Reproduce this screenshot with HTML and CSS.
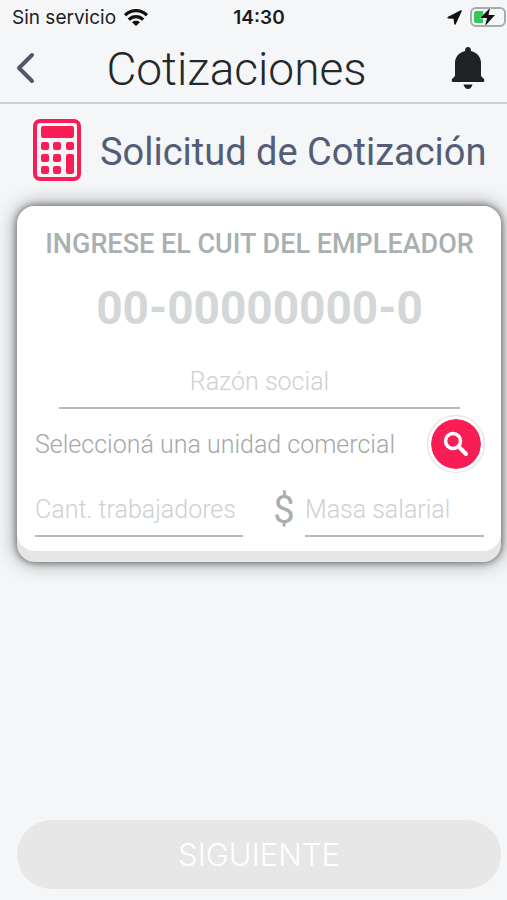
FILE: index.html
```
<!DOCTYPE html>
<html lang="es">
<head>
  <meta charset="UTF-8">
  <meta name="viewport" content="width=device-width, initial-scale=1">
  <title>Cotizaciones</title>
  <link rel="stylesheet" href="styles.css">
</head>
<body>

  <div class="status-bar">
    <div class="status-left">
      <span>Sin servicio</span>
      <svg width="24" height="17" viewBox="0 0 24 17" aria-hidden="true">
        <g fill="none" stroke="#111" stroke-width="3.2">
          <path d="M1 6.200C7.500 .2 16.500 .2 23 6.200"/>
          <path d="M4.800 10.600C9 6.600 15 6.600 19.200 10.600"/>
        </g>
        <path d="M12 17L8 13.200C10.200 11.300 13.800 11.300 16 13.200Z" fill="#111"/>
      </svg>
    </div>
    <strong class="status-time">14:30</strong>
    <div class="status-right">
      <svg width="15" height="15" viewBox="0 0 15 15" aria-hidden="true">
        <path d="M14 1L1.200 7.600L7.200 8L8 14Z" fill="#111" stroke="#111" stroke-width="1.600" stroke-linejoin="round"/>
      </svg>
      <svg width="36" height="20" viewBox="0 0 36 20" aria-hidden="true">
        <rect x="1" y="1" width="34" height="18" rx="5" fill="none" stroke="#a9abad" stroke-width="2"/>
        <path d="M6 4H13V16H6Q4 16 4 14V6Q4 4 6 4Z" fill="#34c759"/>
        <path d="M20 1L10 11H17L15 19L25 8H18.500Z" fill="#111" stroke="#f4f5f7" stroke-width="1" paint-order="stroke"/>
      </svg>
    </div>
  </div>

  <header class="header">
    <button type="button" class="icon-button" aria-label="Volver">
      <svg width="20" height="32" viewBox="0 0 20 32">
        <path d="M16 3L3 16L16 29" fill="none" stroke="#55566e" stroke-width="4" stroke-linecap="round" stroke-linejoin="round"/>
      </svg>
    </button>
    <h1>Cotizaciones</h1>
    <button type="button" class="icon-button" aria-label="Notificaciones">
      <svg width="34" height="42" viewBox="0 0 34 42">
        <path d="M17 0C15 0 14 1.500 14 4C8 5.500 4 10 4 16V29L1 32Q0 35 2 35H32Q34 35 33 32L30 29V16C30 10 26 5.500 20 4C20 1.500 19 0 17 0Z" fill="#1f2225"/>
        <path d="M12.500 37.500H21.500C21 40 19 42 17 42S13 40 12.500 37.500Z" fill="#1f2225"/>
      </svg>
    </button>
  </header>

  <main class="content">
    <div class="section-title">
      <svg width="50" height="64" viewBox="0 0 50 64" aria-hidden="true">
        <rect x="3" y="3" width="44" height="58" rx="5" fill="none" stroke="#f81e55" stroke-width="4"/>
        <g fill="#f81e55">
          <rect x="9" y="8" width="33" height="12" rx="2"/>
          <rect x="9" y="24" width="8" height="8" rx="2"/>
          <rect x="21" y="24" width="8" height="8" rx="2"/>
          <rect x="34" y="24" width="8" height="8" rx="2"/>
          <rect x="9" y="36" width="8" height="8" rx="2"/>
          <rect x="21" y="36" width="8" height="8" rx="2"/>
          <rect x="34" y="36" width="8" height="20" rx="2"/>
          <rect x="9" y="48" width="8" height="8" rx="2"/>
          <rect x="21" y="48" width="8" height="8" rx="2"/>
        </g>
      </svg>
      <h2>Solicitud de Cotización</h2>
    </div>

    <form class="form" id="form">
      <div class="card">
        <label class="cuit-label" for="cuit">INGRESE EL CUIT DEL EMPLEADOR</label>
        <input type="text" class="cuit" id="cuit" inputmode="numeric" placeholder="00-00000000-0">
        <input type="text" class="field company" aria-label="Razón social" placeholder="Razón social">

        <div class="unit-row">
          <select class="unit" aria-label="Unidad comercial">
            <option>Seleccioná una unidad comercial</option>
          </select>
          <button type="button" class="search" aria-label="Buscar">
            <svg width="26" height="26" viewBox="0 0 26 26">
              <circle cx="10" cy="10" r="7.500" fill="none" stroke="#fff" stroke-width="3.500"/>
              <path d="M16 16L23 23" stroke="#fff" stroke-width="4" stroke-linecap="round"/>
            </svg>
          </button>
        </div>

        <div class="amount-row">
          <input type="text" class="field workers" aria-label="Cantidad de trabajadores" placeholder="Cant. trabajadores">
          <label class="currency" for="salary">$</label>
          <input type="text" class="field salary" id="salary" placeholder="Masa salarial">
        </div>
      </div>
    </form>

    <button type="submit" class="next" form="form" disabled>SIGUIENTE</button>
  </main>

</body>
</html>
```
FILE: styles.css
```
* {
  box-sizing: border-box;
}
body {
  margin: 0;
  min-height: 100vh;
  display: flex;
  flex-direction: column;
  background-color: #f4f6f8;
  font-family: Roboto, sans-serif;
}
h1, h2 {
  margin: 0;
  white-space: nowrap;
}
button, input, select {
  font-family: inherit;
  border: none;
  padding: 0;
  margin: 0;
  background: none;
}
svg {
  display: block;
  flex-shrink: 0;
}
.status-bar {
  display: grid;
  grid-template-columns: 1fr auto 1fr;
  align-items: center;
  height: 34px;
  padding: 0 1px 0 12px;
  font-family: Inter, sans-serif;
  font-size: 19px;
  color: #1c1c1e;
}
.status-left, .status-right {
  display: flex;
  align-items: center;
  gap: 8px;
}
.status-right {
  justify-content: flex-end;
}
.status-time {
  font-weight: 600;
}
.header {
  display: flex;
  align-items: center;
  justify-content: space-between;
  height: 70px;
  padding: 0 22px 0 16px;
  border-bottom: 2px solid #cfd0d2;
}
.header h1 {
  padding-right: 14px;
  font-size: 46px;
  line-height: 52px;
  padding-top: 2px;
  font-weight: 300;
  color: #25282b;
}
.icon-button {
  cursor: pointer;
}
.content {
  flex: 1;
  display: flex;
  flex-direction: column;
  padding: 14px 6px 11px 17px;
}
.section-title {
  display: flex;
  align-items: center;
  gap: 18px;
  padding-left: 15px;
}
.section-title h2 {
  padding-top: 4px;
  font-size: 38px;
  font-weight: 400;
  color: #535d76;
}
.form {
  margin-top: 24px;
  padding-bottom: 11px;
  border-radius: 18px;
  background-color: #e6e6e6;
  box-shadow: 0 0 20px 1px rgba(0, 0, 0, 0.4), 0 0 6px 1px rgba(0, 0, 0, 0.4);
}
.card {
  display: flex;
  flex-direction: column;
  padding: 21px 17px 14px 18px;
  border-radius: 18px;
  background-color: #fff;
}
.cuit-label {
  text-align: center;
  white-space: nowrap;
  font-size: 27px;
  line-height: 34px;
  font-weight: 500;
  color: #a9b0b0;
}
.cuit {
  width: 100%;
  height: 60px;
  margin-top: 17px;
  text-align: center;
  font-size: 46px;
  font-weight: 700;
}
.cuit::placeholder {
  color: #d4d7d7;
}
.field {
  min-width: 0;
  height: 54px;
  border-bottom: 2px solid #b9baba;
  font-size: 25px;
  font-weight: 300;
}
.field::placeholder {
  color: #cdd1d1;
}
.company {
  margin: 17px 24px 0;
  text-align: center;
}
.unit-row {
  display: flex;
  align-items: center;
  justify-content: space-between;
  margin-top: 7px;
}
.unit {
  appearance: none;
  font-size: 25px;
  font-weight: 300;
  color: #a5a8a8;
}
.search {
  display: flex;
  align-items: center;
  justify-content: center;
  width: 56px;
  height: 56px;
  border: 3px solid #fff;
  border-radius: 50%;
  background-color: #f81e55;
  background-clip: padding-box;
  box-shadow: 0 0 2px rgba(0, 0, 0, 0.4);
  cursor: pointer;
}
.amount-row {
  display: flex;
  align-items: center;
  margin-top: 11px;
}
.workers {
  flex: 208;
}
.currency {
  width: 62px;
  padding-left: 20px;
  text-align: center;
  font-size: 38px;
  line-height: 44px;
  font-weight: 400;
  color: #a9afaf;
}
.salary {
  flex: 179;
}
.next {
  width: 100%;
  height: 69px;
  margin-top: auto;
  border-radius: 35px;
  background-color: #e7e7e7;
  font-family: Inter, sans-serif;
  font-size: 31px;
  font-weight: 300;
  color: #fff;
}
```
